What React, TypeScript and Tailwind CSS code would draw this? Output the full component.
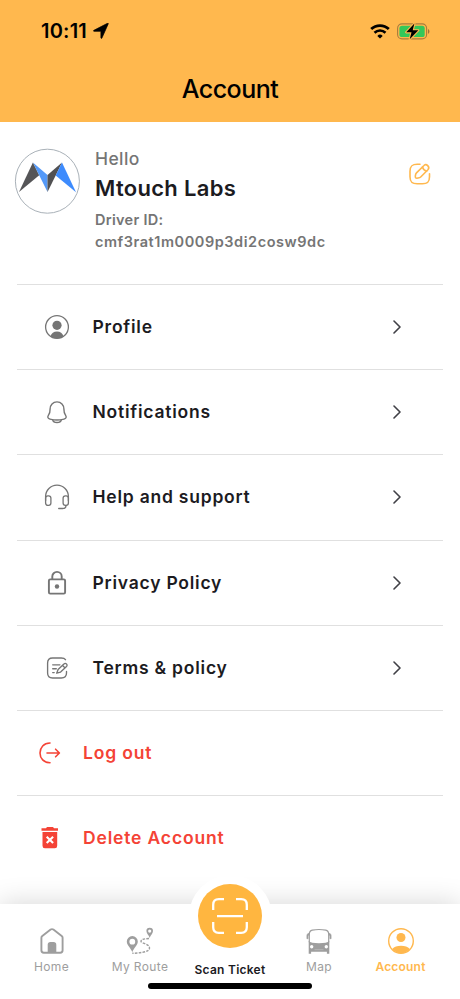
import type { ReactNode } from "react";

function LocationArrow() {
  return (
    <svg width="16" height="16" viewBox="0 0 16 16" fill="#000" stroke="#000" strokeWidth=".7" strokeLinejoin="round">
      <path d="M15.2.9 8.9 15.1c-.3.5-1 .3-1-.3V8.3H1.1c-.7 0-.8-.7-.2-1L14.500.3c.6-.3 1 0 .7.6Z" />
    </svg>
  );
}

function Wifi() {
  return (
    <svg width="20" height="15" viewBox="0 0 20 15" fill="none" stroke="#000">
      <path d="M1.2 5.1a12.7 12.7 0 0 1 17.6 0" strokeWidth="2.8" />
      <path d="M4.5 8.7a8 8 0 0 1 11 0" strokeWidth="2.6" />
      <path d="M10 14.6 7.3 11.9a3.9 3.9 0 0 1 5.4 0Z" fill="#000" stroke="none" />
    </svg>
  );
}

function Battery() {
  return (
    <svg width="33" height="17" viewBox="0 0 33 17">
      <rect x=".6" y=".9" width="29" height="15" rx="4.4" fill="none" stroke="#a97c3c" strokeWidth="1.1" />
      <rect x="2.4" y="2.7" width="25.3" height="11.4" rx="2.6" fill="#34c759" />
      <path d="M31 6v4.8c1.9-.7 1.9-4.1 0-4.8Z" fill="#9d7438" />
      <path d="M17.4.6 9.2 9.3h5.3l-1.8 6.9 8.6-8.9h-5.6Z" fill="#000" stroke="#ffb84e" strokeWidth="2.2" paintOrder="stroke" strokeLinejoin="round" />
    </svg>
  );
}

function Logo() {
  return (
    <svg width="66" height="66" viewBox="0 0 66 66">
      <circle cx="33.4" cy="33.2" r="32" fill="#fff" stroke="#a9b1b8" strokeWidth="1" />
      <path d="M5 44 18.9 14.6 25.2 27.2Z" fill="#555557" />
      <path d="M18.9 14.6 33.5 27v17L25.2 27.2Z" fill="#5499f8" />
      <path d="M33.5 27 48 14.6 41.7 27.5 33.5 44Z" fill="#515153" />
      <path d="M48 14.6 62 44.3 41.7 27.5Z" fill="#3d8bfd" />
    </svg>
  );
}

function Edit() {
  return (
    <svg width="22" height="22" viewBox="0 0 22 22" fill="none" stroke="#ffb84e" strokeWidth="1.6" strokeLinecap="round" strokeLinejoin="round">
      <path d="M11 1.2H8.2C3 1.2 1 3 1 8.2v5.6C1 19 3 20.8 8.2 20.8h5.2c5.2 0 7.1-1.8 7.1-7v-3" />
      <path d="m14.7 2.7-7.2 7.2c-1.1 1.1-1.5 4.2-.9 4.9.7.8 4.1.2 5.1-.8l7.2-7.2c1.1-1.2 1.3-2.6-.2-4.2-1.5-1.5-2.9-1.1-4 .1Z" />
      <path d="M13.5 4c.5 2 2 3.6 4.1 4.2" />
    </svg>
  );
}

function ProfileIcon() {
  return (
    <svg width="26" height="26" viewBox="0 0 26 26" fill="#757575">
      <circle cx="13" cy="13" r="11.4" fill="none" stroke="#757575" strokeWidth="1.3" />
      <circle cx="13" cy="11.3" r="4.6" />
      <path d="M6.4 22.4c1.1-3 3.3-4.8 6.6-4.8s5.5 1.8 6.6 4.8A11.4 11.4 0 0 1 13 24.5a11.4 11.4 0 0 1-6.6-2.1Z" />
    </svg>
  );
}

function BellIcon() {
  return (
    <svg width="26" height="26" viewBox="0 0 26 26" fill="none" stroke="#757575" strokeWidth="1.4" strokeLinecap="round">
      <path d="M13 2.9c-4.1 0-6.900 3.100-6.900 7.100 0 4.200-.5 4.500-1.800 6.500-1.100 1.800-.3 3.100 1.700 3.600 4.500 1.100 9.500 1.100 14 0 2-.5 2.800-1.800 1.700-3.600-1.300-2-1.800-2.300-1.800-6.500 0-4-2.800-7.100-6.900-7.100Z" />
      <path d="M8.7 20.8c.7 3.500 7.900 3.500 8.600 0" />
    </svg>
  );
}

function HeadsetIcon() {
  return (
    <svg width="26" height="26" viewBox="0 0 26 26" fill="none" stroke="#757575" strokeWidth="1.3" strokeLinecap="round">
      <path d="M1.6 16.5v-3.9a11.4 11.4 0 0 1 22.8 0v3.9" />
      <rect x="1.6" y="11.8" width="5.3" height="9.6" rx="2.3" />
      <rect x="19.1" y="11.8" width="5.3" height="9.6" rx="2.3" />
      <path d="M22 21.4c0 2-1.2 3.1-3.2 3.1h-4.1" />
    </svg>
  );
}

function LockIcon() {
  return (
    <svg width="26" height="26" viewBox="0 0 26 26" fill="none" stroke="#757575" strokeWidth="1.9">
      <rect x="4.9" y="9.4" width="16.2" height="14.2" rx="1.3" />
      <path d="M8.3 9.4V6.6a4.7 4.7 0 0 1 9.4 0v2.8" />
      <circle cx="13" cy="16.5" r="2.2" fill="#757575" stroke="none" />
    </svg>
  );
}

function TermsIcon() {
  return (
    <svg width="26" height="26" viewBox="0 0 26 26" fill="none" stroke="#757575" strokeWidth="1.35" strokeLinecap="round" strokeLinejoin="round">
      <path d="M21.5 4.7c-.8-1.2-2.2-1.7-4.2-1.7H8.6C5 3 3.6 4.6 3.6 8v10c0 3.5 1.5 5 5 5h8.7c3.7 0 5.2-1.5 5.2-5v-1.6" />
      <path d="M8.7 9.8h7.2M8.7 13.7h3.6M8.7 17.6h1.5" />
      <path d="m19.9 9.1-5.8 5.5-1.4 3.6 3.9-1.1 5.9-5.6c1.7-1.8-.9-4.2-2.6-2.4ZM18.6 10.5l2.5 2.4" />
    </svg>
  );
}

function LogoutIcon() {
  return (
    <svg width="24" height="24" viewBox="0 0 24 24" fill="none" stroke="#f44336" strokeWidth="1.6" strokeLinecap="round" strokeLinejoin="round">
      <path d="M12 2C5.8 2 2 6.6 2 12s3.8 9.8 10 9.8M9 12h12.300m-3.700-3.800 3.800 3.800-3.800 3.800" />
    </svg>
  );
}

function TrashIcon() {
  return (
    <svg width="24" height="24" viewBox="0 0 24 24">
      <path d="M9 1h6l1 1.2h4v2.500H3.500V2.200H8ZM4.500 5.900h14.700v13.900q0 2.500-2.400 2.500H6.900q-2.400 0-2.400-2.500Z" fill="#f44336" />
      <path d="m8.700 10.700 6.400 6.400m0-6.400-6.400 6.400" stroke="#fff" strokeWidth="2.1" />
    </svg>
  );
}

function Chevron() {
  return (
    <svg width="8" height="14" viewBox="0 0 8 14" fill="none" stroke="#404046" strokeWidth="1.6" strokeLinecap="round" strokeLinejoin="round">
      <path d="M1 1l6 6-6 6" />
    </svg>
  );
}

function HomeIcon() {
  return (
    <svg width="28" height="28" viewBox="0 0 28 28">
      <path d="M3.4 10.7q0-1 .9-1.7L12.6 2.6q1.400-1 2.800 0L23.700 9q.9.7.9 1.700v12.600q0 2.400-2.400 2.400H5.800q-2.400 0-2.400-2.400Z" fill="none" stroke="#9e9e9e" strokeWidth="1.9" />
      <path d="M9.7 25.500v-7.800q0-2.800 2.800-2.800h3q2.800 0 2.800 2.800v7.800Z" fill="#9e9e9e" />
    </svg>
  );
}

function RouteIcon() {
  return (
    <svg width="28" height="28" viewBox="0 0 28 28">
      <path fill="#9e9e9e" fillRule="evenodd" d="M6.3 9.1A5.5 5.5 0 0 0 .8 14.6c0 4 4.3 6.7 5.5 10.7 1.2-4 5.5-6.7 5.5-10.7a5.5 5.5 0 0 0-5.5-5.5Zm0 2.700a2.900 2.900 0 1 1 0 5.800 2.900 2.900 0 0 1 0-5.800ZM23.700.8a3.300 3.300 0 0 0-3.300 3.300c0 2.600 2.600 4.300 3.300 6.800.7-2.500 3.300-4.200 3.300-6.800A3.300 3.300 0 0 0 23.700.8Zm0 1.700a1.600 1.600 0 1 1 0 3.200 1.600 1.600 0 0 1 0-3.200Z" />
      <path d="M23 11.5c-3.600.2-7.800.6-8 2.700-.2 2.300 8.500 2.200 8.500 6.800 0 4.300-10 5-17.200 5.300" fill="none" stroke="#9e9e9e" strokeWidth="1.4" strokeDasharray="2.6 1.2" />
    </svg>
  );
}

function ScanIcon() {
  return (
    <svg width="36" height="36" viewBox="0 0 36 36" fill="none" stroke="#fff" strokeWidth="2.3">
      <path d="M1.2 12V6.8q0-5.6 5.6-5.6H12M24 1.2h5.2q5.6 0 5.6 5.6V12M34.8 24v5.2q0 5.6-5.6 5.6H24M12 34.8H6.8q-5.6 0-5.6-5.6V24M5 18.100h26" />
    </svg>
  );
}

function BusIcon() {
  return (
    <svg width="28" height="28" viewBox="0 0 28 28">
      <path d="M4.3 15.2V7.2q0-3.5 3-4.1 6.7-1.2 13.4 0 3 .6 3 4.1v8" fill="none" stroke="#9e9e9e" strokeWidth="1.2" />
      <path d="M4.1 6.2q-2.2.3-2.2 2.1v3.4h1.2V8.2h1ZM23.9 6.2q2.2.3 2.2 2.1v3.4h-1.2V8.2h-1Z" fill="#9e9e9e" stroke="#9e9e9e" strokeWidth=".6" />
      <path fillRule="evenodd" d="M3.7 14q2.2 2.2 10.3 2.2T24.3 14v12.8h-2.4v-2H6.1v2H3.7Zm3 4a1.7 1.7 0 1 0 0 3.4 1.7 1.7 0 0 0 0-3.4Zm14.6 0a1.7 1.7 0 1 0 0 3.4 1.7 1.7 0 0 0 0-3.4Z" fill="#9e9e9e" />
      <path d="M9.5 22.7h9" stroke="#b5b5b5" strokeWidth="1" />
    </svg>
  );
}

function AccountIcon() {
  return (
    <svg width="28" height="28" viewBox="0 0 28 28" fill="#ffb84e">
      <circle cx="14" cy="14" r="12.3" fill="none" stroke="#ffb84e" strokeWidth="1.4" />
      <circle cx="14" cy="10.5" r="4.5" />
      <path d="M5.2 22c2-2.3 5-3.3 8.8-3.3s6.8 1 8.8 3.3A12.3 12.3 0 0 1 14 26.300 12.300 12.300 0 0 1 5.200 22Z" />
    </svg>
  );
}

const rows: { label: string; icon: ReactNode }[] = [
  { label: "Profile", icon: <ProfileIcon /> },
  { label: "Notifications", icon: <BellIcon /> },
  { label: "Help and support", icon: <HeadsetIcon /> },
  { label: "Privacy Policy", icon: <LockIcon /> },
  { label: "Terms & policy", icon: <TermsIcon /> },
];

const dangerRows: { label: string; icon: ReactNode }[] = [
  { label: "Log out", icon: <LogoutIcon /> },
  { label: "Delete Account", icon: <TrashIcon /> },
];

function Tab({ icon, label, width, active }: { icon: ReactNode; label: string; width: string; active?: boolean }) {
  return (
    <div className={`flex flex-col items-center pt-[23px] ${width}`}>
      {icon}
      <span className={`mt-1 whitespace-nowrap text-[12px] leading-4 ${active ? "font-semibold tracking-[0.2px] text-[#ffb84e]" : "tracking-[0.35px] text-[#9e9e9e]"}`}>
        {label}
      </span>
    </div>
  );
}

export default function App() {
  return (
    <div className="flex h-[999px] w-[460px] flex-col overflow-hidden bg-white font-['Inter',sans-serif]">
      <header className="h-[122px] shrink-0 bg-[#ffb84e] text-black">
        <div className="flex h-[62px] items-center pl-[41px] pr-[30px]">
          <span className="w-[47px] whitespace-nowrap text-[20px] font-semibold leading-6 tracking-[0.2px]">10:11</span>
          <span className="ml-[5px]"><LocationArrow /></span>
          <span className="ml-auto"><Wifi /></span>
          <span className="ml-[7px]"><Battery /></span>
        </div>
        <h1 className="mt-[11px] text-center text-[25px] font-medium leading-8 tracking-[-0.5px]">Account</h1>
      </header>

      <section className="flex h-[162px] shrink-0 pl-[14px] pr-[29px] pt-[26px]">
        <Logo />
        <div className="ml-[15px] font-medium text-[#757575]">
          <p className="text-[17.5px] leading-[21px] tracking-[0.4px]">Hello</p>
          <h2 className="mt-[5px] text-[22px] font-semibold leading-[28px] tracking-[0.3px] text-[#1c1b1f]">Mtouch Labs</h2>
          <p className="mt-[7px] text-[14.5px] font-semibold leading-[21.5px] tracking-[0.3px]">Driver ID:</p>
          <p className="text-[14.5px] font-semibold leading-[21.5px] tracking-[0.55px]">cmf3rat1m0009p3di2cosw9dc</p>
        </div>
        <button className="ml-auto mt-[15px] h-[22px]"><Edit /></button>
      </section>

      <main className="shrink-0 px-[17px]">
        {rows.map((row) => (
          <div key={row.label} className="flex h-[85.2px] items-center border-t border-[#e0e0e0] pl-[27px] pr-[42px]">
            {row.icon}
            <span className="ml-[22.5px] text-[17.5px] font-semibold tracking-[0.77px] text-[#1c1b1f]">{row.label}</span>
            <span className="ml-auto"><Chevron /></span>
          </div>
        ))}
        {dangerRows.map((row) => (
          <div key={row.label} className="flex h-[85.2px] items-center border-t border-[#e0e0e0] pl-[21px]">
            {row.icon}
            <span className="ml-[21px] text-[17.5px] font-semibold tracking-[0.84px] text-[#f44336]">{row.label}</span>
          </div>
        ))}
      </main>

      <nav className="relative mt-auto h-[95px] shrink-0">
        <div className="absolute inset-0 bg-white shadow-[0_0_26px_rgba(0,0,0,0.17)]" />
        <div className="absolute left-[188.5px] top-[-29.5px] size-[83px] rounded-full bg-white" />
        <div className="relative flex pl-[7px]">
          <Tab icon={<HomeIcon />} label="Home" width="w-[89px]" />
          <Tab icon={<RouteIcon />} label="My Route" width="w-[88px]" />
          <div className="-mt-5 flex w-[92px] flex-col items-center">
            <div className="flex size-16 items-center justify-center rounded-full bg-[#ffb640]"><ScanIcon /></div>
            <span className="mt-[13.5px] whitespace-nowrap text-[12px] font-semibold leading-4 tracking-[0.25px] text-[#1c1b1f]">Scan Ticket</span>
          </div>
          <Tab icon={<BusIcon />} label="Map" width="w-[86px]" />
          <Tab icon={<AccountIcon />} label="Account" width="w-[77px]" active />
        </div>
        <div className="absolute left-[148px] top-[79px] h-[6px] w-[164px] rounded-full bg-black" />
      </nav>
    </div>
  );
}
